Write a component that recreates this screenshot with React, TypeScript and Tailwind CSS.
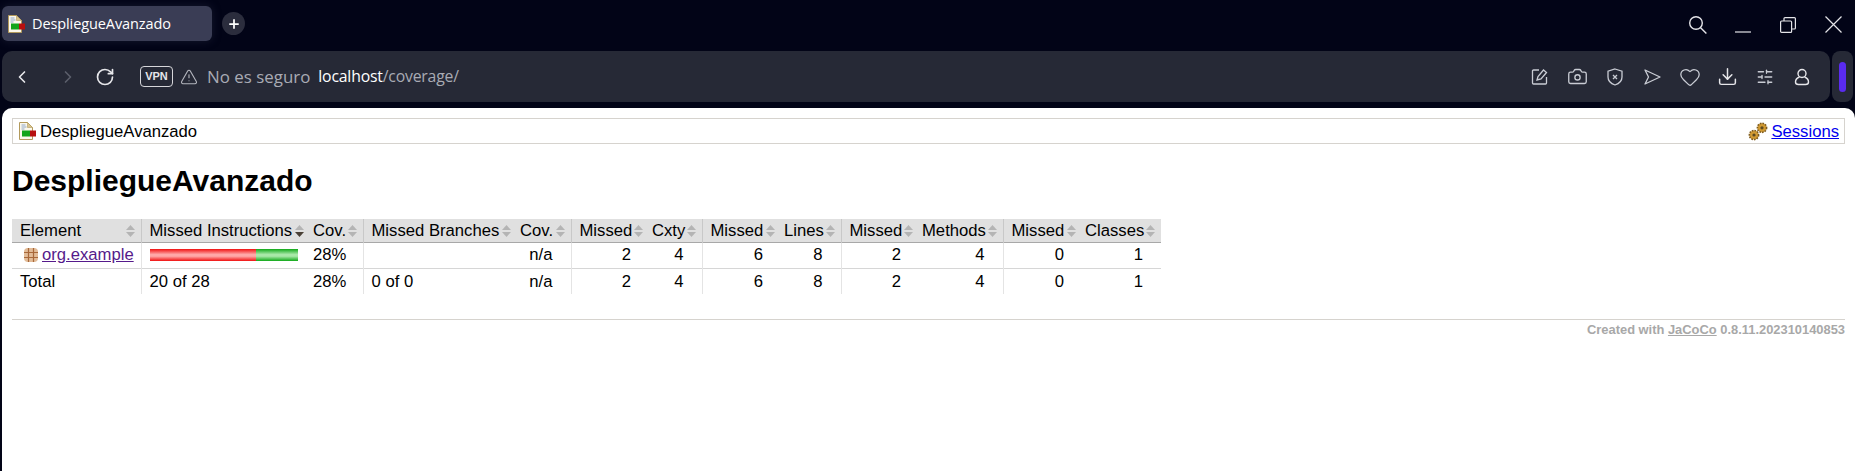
import { ChevronLeft, ChevronRight, RotateCw, TriangleAlert, Camera, Heart, Download, SlidersHorizontal, Plus } from "lucide-react";

const sans = "font-['Liberation_Sans',Arial,sans-serif]";

const columns = [
  { label: "Element", width: "w-[129px]", group: false, align: "left" },
  { label: "Missed Instructions", width: "w-[169px]", group: true, align: "left", sorted: true },
  { label: "Cov.", width: "w-[53px]", group: false, align: "right" },
  { label: "Missed Branches", width: "w-[154px]", group: true, align: "left" },
  { label: "Cov.", width: "w-[54px]", group: false, align: "right" },
  { label: "Missed", width: "w-[78px]", group: true, align: "right" },
  { label: "Cxty", width: "w-[53px]", group: false, align: "right" },
  { label: "Missed", width: "w-[79px]", group: true, align: "right" },
  { label: "Lines", width: "w-[60px]", group: false, align: "right" },
  { label: "Missed", width: "w-[78px]", group: true, align: "right" },
  { label: "Methods", width: "w-[84px]", group: false, align: "right" },
  { label: "Missed", width: "w-[79px]", group: true, align: "right" },
  { label: "Classes", width: "w-[79px]", group: false, align: "right" },
];

function SortArrows({ sorted }: { sorted?: boolean }) {
  return (
    <svg width="9" height="12" viewBox="0 0 9 12" className="absolute right-[6px] top-[6px]">
      <path d="M4.5 0 9 5H0z" fill="#b4b4b4" />
      <path d="M4.5 12 0 7h9z" fill={sorted ? "#4a4036" : "#b4b4b4"} />
    </svg>
  );
}

function ReportIcon() {
  return (
    <svg width="17" height="18" viewBox="0 0 17 18" className="shrink-0">
      <path d="M.5.5h8l5 5v12H.5z" fill="#fbf8ec" stroke="#b39a5c" />
      <path d="M8.5.5v5h5z" fill="#d9c58f" stroke="#b39a5c" strokeWidth="0.6" />
      <path d="M2.5 3h4M2.5 5h5M2.5 7h3" stroke="#8fa6c8" />
      <rect x="3" y="8.5" width="8" height="6" fill="#12a51a" />
      <rect x="11" y="8.5" width="6" height="6" fill="#b8100f" />
    </svg>
  );
}

function PackageIcon() {
  return (
    <svg width="16" height="16" viewBox="0 0 16 16" className="shrink-0">
      <rect x="1" y="1" width="14" height="14" rx="4" fill="#e2bc98" />
      <path d="M1 5.5h14M1 10.5h14M5.5 1v14M10.5 1v14" stroke="#a8683a" strokeWidth="1.2" />
    </svg>
  );
}

function Gear({ x, y, r }: { x: number; y: number; r: number }) {
  return (
    <g>
      <circle cx={x} cy={y} r={r} fill="#d19a32" stroke="#7c5a1e" strokeWidth="1.6" strokeDasharray="1.6 1.1" />
      <circle cx={x} cy={y} r={r * 0.35} fill="#5e4a20" />
    </g>
  );
}

function SessionsIcon() {
  return (
    <svg width="20" height="19" viewBox="0 0 20 19" className="shrink-0">
      <Gear x={6} y={13} r={4.6} />
      <Gear x={14} y={5.8} r={4.6} />
    </svg>
  );
}

function Cell({ children, group, right, className = "" }: { children?: React.ReactNode; group?: boolean; right?: boolean; className?: string }) {
  return (
    <td
      className={`p-0 align-middle whitespace-nowrap ${group ? "border-l border-[#e4e4e4] pl-[8px]" : "pl-[3px]"} ${right ? "pr-[18px] text-right" : ""} ${className}`}
    >
      {children}
    </td>
  );
}

const totals = ["2", "4", "6", "8", "2", "4", "0", "1"];

function Numbers({ className }: { className?: string }) {
  return (
    <>
      {totals.map((n, i) => (
        <Cell key={i} group={i % 2 === 0} right className={className}>
          {n}
        </Cell>
      ))}
    </>
  );
}

const toolbarIcon = "text-[#c9ccd4] shrink-0";

export default function App() {
  return (
    <div className="flex h-[471px] w-[1855px] flex-col overflow-hidden bg-[#020417] font-['Open_Sans',sans-serif]">
      {/* Tab strip */}
      <div className="flex h-[51px] shrink-0 items-start">
        <div className="ml-[2px] mt-[6px] flex h-[35px] w-[210px] items-center rounded-[6px] bg-[#3a3d55] pl-[6px] shadow-[0_0_10px_rgba(60,64,90,0.35)]">
          <ReportIcon />
          <span className="ml-[7px] text-[14.5px] tracking-[-0.1px] text-white">DespliegueAvanzado</span>
        </div>
        <div className="ml-[10px] mt-[12px] flex size-[23px] items-center justify-center rounded-full bg-[#2b2d3d]">
          <Plus size={14} strokeWidth={3} className="text-white" />
        </div>
        <div className="ml-auto mr-[13px] mt-[15px] flex items-center text-[#e4e4e8]">
          <svg width="19" height="19" viewBox="0 0 19 19" fill="none" stroke="currentColor" strokeWidth="1.4">
            <circle cx="8" cy="8" r="6.3" />
            <path d="M12.4 12.4l6 6" />
          </svg>
          <svg width="16" height="17" viewBox="0 0 16 17" fill="none" stroke="currentColor" strokeWidth="1.2" className="ml-[28px]">
            <path d="M0 16h16" />
          </svg>
          <svg width="16" height="16" viewBox="0 0 16 16" fill="none" stroke="currentColor" strokeWidth="1.2" className="ml-[29px]">
            <rect x="0.6" y="4" width="11" height="11.4" rx="1" />
            <path d="M4 4V1.6a1 1 0 0 1 1-1h9.4a1 1 0 0 1 1 1V11a1 1 0 0 1-1 1H12" />
          </svg>
          <svg width="17" height="17" viewBox="0 0 17 17" fill="none" stroke="currentColor" strokeWidth="1.2" className="ml-[29px]">
            <path d="M.5.5l16 16M16.5.5l-16 16" />
          </svg>
        </div>
      </div>

      {/* Address bar */}
      <div className="flex h-[51px] shrink-0">
        <div className="ml-[2px] flex w-[1828px] items-center rounded-[10px] bg-[#262936]">
          <ChevronLeft size={20} strokeWidth={2} className="ml-[10px] shrink-0 text-[#e6e6ea]" />
          <ChevronRight size={20} strokeWidth={2} className="ml-[26px] shrink-0 text-[#5b5e6b]" />
          <RotateCw size={20} strokeWidth={2} className="ml-[17px] shrink-0 text-[#e6e6ea]" />
          <span className={`ml-[25px] flex h-[21px] w-[33px] items-center justify-center rounded-[4px] border border-[#d6d6da] text-[11px] font-bold text-[#e6e6ea] ${sans}`}>
            VPN
          </span>
          <TriangleAlert size={18} strokeWidth={1.5} className="ml-[7px] shrink-0 text-[#b4b6be]" />
          <span className="ml-[9px] text-[16.9px] text-[#a9abb4]">No es seguro</span>
          <span className="ml-[8px] text-[15.8px] tracking-[-0.2px] text-[#a9abb4]">
            <span className="text-white">localhost</span>/coverage/
          </span>
          <div className="ml-auto mr-[19px] flex items-center gap-[19.4px]">
            <svg width="18" height="18" viewBox="0 0 18 18" fill="none" stroke="currentColor" strokeWidth="1.3" className={toolbarIcon}>
              <path d="M8 2H2.5a1 1 0 0 0-1 1v12a1 1 0 0 0 1 1h12a1 1 0 0 0 1-1V9" />
              <path d="M6 12l1-3.5 5.5-6.5 3 2.5-5.5 6.5z" />
            </svg>
            <Camera size={21} strokeWidth={1.5} className={`-mx-[1.5px] ${toolbarIcon}`} />
            <svg width="18" height="18" viewBox="0 0 18 18" fill="none" stroke="currentColor" strokeWidth="1.3" className={toolbarIcon}>
              <path d="M9 1l7 2.2V9c0 4-3 6.7-7 8-4-1.3-7-4-7-8V3.2z" />
              <path d="M7 7l4 4M11 7l-4 4" />
            </svg>
            <svg width="18" height="18" viewBox="0 0 18 18" fill="none" stroke="currentColor" strokeWidth="1.3" className={toolbarIcon}>
              <path d="M2 2l15 7-15 7 3.5-7z" strokeLinejoin="round" />
            </svg>
            <Heart size={22} strokeWidth={1.4} className={`-mx-[2px] ${toolbarIcon}`} />
            <Download size={21} strokeWidth={1.7} className={`-mx-[1.5px] text-[#e6e6ea] shrink-0`} />
            <SlidersHorizontal size={18} strokeWidth={1.7} className={toolbarIcon} />
            <svg width="18" height="18" viewBox="0 0 18 18" fill="none" stroke="currentColor" strokeWidth="1.4" className="shrink-0 text-[#e6e6ea]">
              <circle cx="9" cy="5.5" r="4" />
              <path d="M6.5 9C3.5 10 2.5 12 2.5 14c0 1.5 1 2.5 3 2.5h7c2 0 3-1 3-2.5 0-2-1-4-4-5" />
            </svg>
          </div>
        </div>
        <div className="ml-[2px] flex w-[21px] items-center justify-center rounded-[8px] bg-[#262936]">
          <div className="h-[30px] w-[7px] rounded-full bg-[#5a2bf0]" />
        </div>
      </div>

      {/* Page */}
      <div className={`ml-[2px] mt-[6px] min-h-0 flex-1 rounded-t-[10px] bg-white px-[10px] pt-[10px] text-[16.67px] text-black ${sans}`}>
        <div className="flex h-[26px] items-center justify-between border border-[#d6d3ce] pl-[6px] pr-[5px]">
          <div className="flex items-center gap-[4px]">
            <ReportIcon />
            <span>DespliegueAvanzado</span>
          </div>
          <div className="flex items-center gap-[3px]">
            <SessionsIcon />
            <a href="#" className="text-[#0000ee] underline">Sessions</a>
          </div>
        </div>

        <h1 className="mt-[19px] text-[30px] leading-[36px] font-bold">DespliegueAvanzado</h1>

        <table className="mt-[20px] w-[1149px] table-fixed border-collapse leading-[20px]">
          <colgroup>
            {columns.map((c, i) => (
              <col key={i} className={c.width} />
            ))}
          </colgroup>
          <thead>
            <tr className="h-[23px] border-b border-[#a8a8a8] bg-[#e0e0e0]">
              {columns.map((c, i) => (
                <td
                  key={i}
                  className={`relative p-0 pt-[1px] whitespace-nowrap ${i === 0 ? "pl-[8px]" : c.group ? "border-l border-[#c8c8c8] pl-[8px]" : "pl-[3px]"}`}
                >
                  {c.label}
                  <SortArrows sorted={c.sorted} />
                </td>
              ))}
            </tr>
          </thead>
          <tbody>
            <tr className="h-[26px] border-b border-[#d6d6d6]">
              <td className="p-0 pl-[11px] whitespace-nowrap">
                <div className="flex items-center gap-[3px]">
                  <PackageIcon />
                  <a href="#" className="text-[#551a8b] underline">org.example</a>
                </div>
              </td>
              <Cell group>
                <div className="flex h-[12px] w-[148px]">
                  <div className="h-full w-[106px] bg-[linear-gradient(#f01010,#ffa8a8_45%,#ffa8a8_60%,#f01010)]" />
                  <div className="h-full w-[42px] bg-[linear-gradient(#10a818,#a8e8a8_45%,#a8e8a8_60%,#10a818)]" />
                </div>
              </Cell>
              <Cell>28%</Cell>
              <Cell group />
              <Cell right>n/a</Cell>
              <Numbers />
            </tr>
            <tr className="h-[26px]">
              <td className="p-0 pl-[8px] pt-[1px]">Total</td>
              <Cell group className="pt-[1px]">20 of 28</Cell>
              <Cell className="pt-[1px]">28%</Cell>
              <Cell group className="pt-[1px]">0 of 0</Cell>
              <Cell right className="pt-[1px]">n/a</Cell>
              <Numbers className="pt-[1px]" />
            </tr>
          </tbody>
        </table>

        <div className="mt-[25px] border-t border-[#d6d3ce] pt-[1px] text-right text-[12.9px] leading-[18px] font-bold text-[#a8a8a8]">
          Created with <a href="#" className="underline">JaCoCo</a> 0.8.11.202310140853
        </div>
      </div>
    </div>
  );
}
